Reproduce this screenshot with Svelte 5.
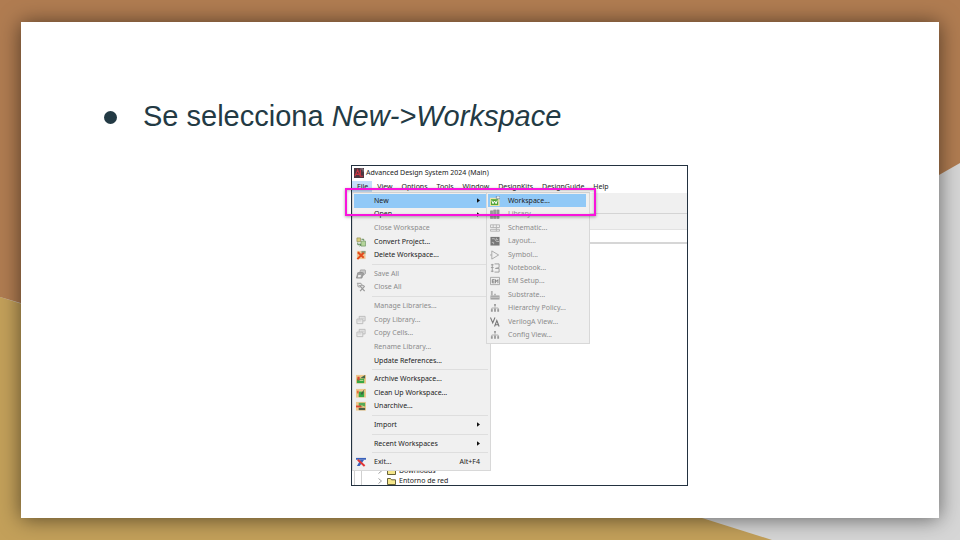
<script>
  const bar = ['File', 'View', 'Options', 'Tools', 'Window', 'DesignKits', 'DesignGuide', 'Help'];

  const fileMenu = [
    { label: 'New', arrow: true, active: true },
    { label: 'Open', arrow: true },
    { label: 'Close Workspace', off: true },
    { label: 'Convert Project...', icon: 'convert' },
    { label: 'Delete Workspace...', icon: 'delete' },
    null,
    { label: 'Save All', icon: 'save', off: true },
    { label: 'Close All', icon: 'closeall', off: true },
    null,
    { label: 'Manage Libraries...', off: true },
    { label: 'Copy Library...', icon: 'copy', off: true },
    { label: 'Copy Cells...', icon: 'copy', off: true },
    { label: 'Rename Library...', off: true },
    { label: 'Update References...' },
    null,
    { label: 'Archive Workspace...', icon: 'archive' },
    { label: 'Clean Up Workspace...', icon: 'clean' },
    { label: 'Unarchive...', icon: 'unarchive' },
    null,
    { label: 'Import', arrow: true },
    null,
    { label: 'Recent Workspaces', arrow: true },
    null,
    { label: 'Exit...', icon: 'exit', key: 'Alt+F4' }
  ];

  const newMenu = [
    { label: 'Workspace...', icon: 'workspace', active: true },
    { label: 'Library...', icon: 'library', off: true },
    { label: 'Schematic...', icon: 'schematic', off: true },
    { label: 'Layout...', icon: 'layout', off: true },
    { label: 'Symbol...', icon: 'symbol', off: true },
    { label: 'Notebook...', icon: 'notebook', off: true },
    { label: 'EM Setup...', icon: 'em', off: true },
    { label: 'Substrate...', icon: 'substrate', off: true },
    { label: 'Hierarchy Policy...', icon: 'tree', off: true },
    { label: 'VerilogA View...', icon: 'verilog', off: true },
    { label: 'Config View...', icon: 'tree', off: true }
  ];
</script>

{#snippet glyph(name)}
  <svg class="icon" viewBox="0 0 11 11" aria-hidden="true">
    {#if name === 'convert'}
      <path d="M1 1h4v4H1z" fill="#d8cf7c" stroke="#8b8a50" stroke-width=".7" />
      <path d="M5.500 4.500h5v5.500h-5z" fill="#b5d59b" stroke="#6b9060" stroke-width=".7" />
      <path d="M2 6v2.500h3M4 7l1.500 1.500L4 10M6 2.500h2.500V4" fill="none" stroke="#4c7d42" />
    {:else if name === 'delete'}
      <path d="M1 1h9.500v9H1z" fill="#f0c796" />
      <path d="M6 1h4.500v3H6z" fill="#8b9a7a" />
      <path d="M2 2.500l6.500 6M8.500 3L1.500 10" stroke="#e34b1c" stroke-width="2.200" />
    {:else if name === 'save'}
      <path d="M5 1h5l.5 1v3L8 7V4H4z" fill="#c8c8c8" stroke="#999" stroke-width=".8" />
      <path d="M2 4h5l1 1-1.500 5H.5z" fill="#a5a5a5" stroke="#858585" stroke-width=".8" />
      <path d="M2.500 6.500h3L5 9H2z" fill="#eee" />
    {:else if name === 'closeall'}
      <path d="M1 1.500h4l2 2M3 4h6M2 1.500v3l2 1.500" fill="none" stroke="#aaa" stroke-width="1.200" />
      <path d="M4.500 4.500l5 5.500M9.500 4.500l-5 5.500" stroke="#999" stroke-width="1.400" />
    {:else if name === 'copy'}
      <path d="M3.500 1.500h6.500v5H3.500z" fill="#e8e8e8" stroke="#b9b9b9" />
      <path d="M1 4.500h6.500v5H1z" fill="#ececec" stroke="#b9b9b9" />
      <path d="M2 6.500h4M5 3.500h4" stroke="#c9c9c9" />
    {:else if name === 'archive' || name === 'clean' || name === 'unarchive'}
      <path d="M0 1h11v9.500H0z" fill="#efc88c" />
      {#if name === 'archive'}
        <path d="M1 5h8v5H1z" fill="#38a845" /><path d="M1.500 3h2.500v4H1.500z" fill="#d94a34" />
        <path d="M5 4l5-3v4z" fill="#47664a" /><path d="M4 7h4" stroke="#d8e5a0" />
      {:else if name === 'clean'}
        <path d="M3 4h6v6H3z" fill="#38a845" /><path d="M1 3h2v3H1z" fill="#e46d3d" />
        <path d="M9.500 1L5 6.500l2 1z" fill="#47573e" />
      {:else}
        <path d="M3 2h7v4H3z" fill="#54aa58" /><path d="M0 5h6v2H0z" fill="#d94a34" />
        <path d="M3 7.500h7V10H3z" fill="#4d5d44" /><path d="M6 5l3 1.500" stroke="#eed07a" />
      {/if}
    {:else if name === 'exit'}
      <path d="M0 1h11v2H0z" fill="#3a61ba" />
      <path d="M5 3h4L4 10H1z" fill="#3a61ba" />
      <path d="M2 3l7.500 7" stroke="#e23535" stroke-width="2.200" />
    {:else if name === 'workspace'}
      <path d="M0 2h10.500v9H0z" fill="#f1e7a9" />
      <path d="M1 3.500h8V10H1z" fill="#52a637" />
      <path d="M2 5l1.300 3.500L5 5.500l1.700 3L8 5" fill="none" stroke="#fff" stroke-width="1.100" />
      <path d="M7 0h4v3H7z" fill="#e9edf3" stroke="#60788f" stroke-width=".7" />
    {:else if name === 'library'}
      <path d="M.5 2H3v8.500H.5zM4 1h2.500v9.500H4zM7.500 1H10v9.500H7.500z" fill="#9b9b9b" stroke="#858585" stroke-width=".6" />
    {:else if name === 'schematic'}
      <path d="M.5 2h10v3H.5zM.5 7h10v2H.5zM3.500 2v3M7 2v7" fill="none" stroke="#b3b3b3" />
    {:else if name === 'layout'}
      <path d="M.5 1h10v9.500H.5z" fill="#777" />
      <path d="M2 3h3l2 3h3M2 7h2v2M7 2v2h2" fill="none" stroke="#c0c0c0" />
    {:else if name === 'symbol'}
      <path d="M2 1v9l7.500-4.500zM0 5.500h2" fill="none" stroke="#a5a5a5" />
    {:else if name === 'notebook'}
      <path d="M2.500 1v9M1 2h3M1 5h3M1 9h3M5 1h5v4L6 6h4v4H5" fill="none" stroke="#999" />
    {:else if name === 'em'}
      <path d="M.5 1.500h10v8H.5z" fill="#eee" stroke="#a5a5a5" />
      <path d="M5 4H2.500v3.500H5M2.500 5.700H5M6 8V4l1.300 2L8.700 4v4" fill="none" stroke="#777" stroke-width=".9" />
    {:else if name === 'substrate'}
      <path d="M.5 6h10v4.500H.5z" fill="#a2a2a2" />
      <path d="M1 1h2v5H1zM4.500 4h2v2h-2z" fill="#b3b3b3" /><path d="M1 8h9" stroke="#ccc" />
    {:else if name === 'tree'}
      <path d="M5.500 2v3M2 8V5.500h7V8" fill="none" stroke="#aaa" />
      <path d="M4.500 1h2v2h-2zM1 7h2v2.500H1zM4.500 6h2v3.500h-2zM8 7h2v2.500H8z" fill="#999" />
    {:else if name === 'verilog'}
      <path d="M.5 .5L3 6.500 5.500 .5M5 10.500L7.500 4l2.500 6.500M6 8.500h3" fill="none" stroke="#777" stroke-width="1.200" />
    {/if}
  </svg>
{/snippet}

{#snippet entry(item)}
  {#if item}
    <button class="item" class:active={item.active} disabled={item.off} role="menuitem">
      <span class="slot">{#if item.icon}{@render glyph(item.icon)}{/if}</span>
      <span class="label">{item.label}</span>
      {#if item.key}<span>{item.key}</span>{/if}
      {#if item.arrow}<svg class="arrow" viewBox="0 0 4 6" aria-hidden="true"><path d="M0 0l4 3-4 3z" fill="#111" /></svg>{/if}
    </button>
  {:else}
    <div class="sep" role="separator"></div>
  {/if}
{/snippet}

<main class="slide">
  <svg class="backdrop" viewBox="0 0 960 540" preserveAspectRatio="none" aria-hidden="true">
    <path d="M0 0h960v540H0z" fill="#d6d6d6" />
    <path d="M0 297L772 540H0z" fill="#c3a05a" />
    <path d="M0 0h960v163L480 437 0 297z" fill="#b07c51" />
  </svg>

  <section class="sheet">
    <ul class="points">
      <li>Se selecciona <em>New-&gt;Workspace</em></li>
    </ul>

    <div class="window">
      <header class="title">
        <svg class="logo" viewBox="0 0 11 11" aria-hidden="true">
          <path d="M0 0h11v11H0z" fill="#4b3841" />
          <path d="M1 9l3-7 3 7M2 7h4M7 2v7h3" fill="none" stroke="#c93543" stroke-width="1.200" />
          <path d="M7 1h3v3" fill="none" stroke="#9b8c95" />
        </svg>
        <span>Advanced Design System 2024 (Main)</span>
      </header>

      <nav class="bar">
        {#each bar as name, i}
          <button class:open={i === 0}>{name}</button>
        {/each}
      </nav>

      <div class="tools"></div>
      <div class="tools second"></div>
      <div class="strip"></div>

      <div class="files">
        {#each ['Downloads', 'Entorno de red'] as name}
          <div class="node">
            <svg class="chevron" viewBox="0 0 4 6" aria-hidden="true"><path d="M.5.5L3.500 3 .5 5.500" fill="none" stroke="#888" stroke-width=".8" /></svg>
            <svg class="folder" viewBox="0 0 9 7" aria-hidden="true"><path d="M.5 6.500v-6h3l1 1.300h4v4.700z" fill="#f5e68a" stroke="#55502a" stroke-width=".9" /></svg>
            <span>{name}</span>
          </div>
        {/each}
      </div>

      <div class="menu main" role="menu" aria-label="File">
        {#each fileMenu as item}{@render entry(item)}{/each}
      </div>
      <div class="menu sub" role="menu" aria-label="New">
        {#each newMenu as item}{@render entry(item)}{/each}
      </div>
      <div class="highlight"></div>
    </div>
  </section>
</main>

<style>
  .slide {
    position: relative;
    box-sizing: border-box;
    min-height: 100vh;
    padding: 22px 21px;
    display: flex;
    overflow: hidden;
    font-family: "Liberation Sans", Arial, sans-serif;
  }
  .backdrop {
    position: absolute;
    inset: 0;
    width: 100%;
    height: 100%;
  }
  .sheet {
    position: relative;
    flex: 1;
    box-sizing: border-box;
    padding: 76px 80px 32px;
    background: #fff;
    box-shadow: 0 1px 20px rgba(0, 0, 0, 0.55);
  }
  .points {
    margin: 0 0 31px;
    padding: 0;
    list-style: none;
    color: #233a44;
    font-size: 29px;
    line-height: 36px;
  }
  .points li {
    display: flex;
    align-items: center;
    white-space: pre;
  }
  .points li::before {
    content: "";
    width: 13px;
    height: 13px;
    margin: 3px 26px 0 3px;
    border-radius: 50%;
    background: #233a44;
  }
  .window {
    position: relative;
    display: flex;
    flex-direction: column;
    box-sizing: border-box;
    width: 337px;
    min-height: 321px;
    margin-left: 250px;
    border: 1px solid #233240;
    background: #fff;
    color: #222;
    font-family: "Noto Sans", "Open Sans", sans-serif;
    font-size: 7px;
    line-height: 12px;
  }
  .title {
    display: flex;
    align-items: center;
    gap: 2px;
    height: 14px;
    padding: 0 0 1px 2px;
  }
  .logo {
    width: 10px;
    height: 10px;
  }
  button {
    margin: 0;
    padding: 0;
    border: 0;
    background: none;
    color: inherit;
    font: inherit;
    text-align: left;
    white-space: nowrap;
  }
  .bar {
    display: flex;
    height: 12px;
  }
  .bar button {
    padding: 0 4px 0 5px;
  }
  .bar .open {
    background: #c5dffa;
  }
  .tools {
    height: 20px;
    background: #f0f0f0;
    border-bottom: 1px solid #d4d4d4;
  }
  .second {
    height: 15px;
    border-bottom-color: #e2e2e2;
  }
  .strip {
    height: 12px;
    border-bottom: 2px solid #d6d6d6;
  }
  .files {
    display: flex;
    flex-direction: column;
    justify-content: flex-end;
    flex: 1;
    margin-left: 2px;
    padding-left: 17px;
    border-left: 1px solid #d0d0d0;
    background: linear-gradient(#d0d0d0, #d0d0d0) 6px 0 / 1px 100% no-repeat;
  }
  .node {
    display: flex;
    align-items: center;
    height: 12px;
  }
  .node:last-child {
    height: 8px;
  }
  .chevron {
    width: 4px;
    height: 6px;
    margin: 0 5px 0 6px;
  }
  .folder {
    width: 9px;
    height: 7px;
    margin-right: 3px;
  }
  .menu {
    position: absolute;
    display: flex;
    flex-direction: column;
    box-sizing: border-box;
    padding: 1px;
    border: 1px solid #d8d8d8;
    background: #f0f0f0;
  }
  .main {
    top: 26px;
    left: 0;
    width: 139px;
    height: 279px;
  }
  .sub {
    top: 26px;
    left: 134px;
    width: 104px;
    height: 152px;
  }
  .item {
    display: flex;
    flex: 1;
    align-items: center;
    padding-right: 9px;
  }
  .item:disabled {
    color: #8b8b8b;
  }
  .active {
    background: #91c9f7;
  }
  .main .active,
  .sub .active {
    margin-right: 2px;
    padding-right: 7px;
  }
  .slot {
    display: flex;
    width: 18px;
    padding-left: 2px;
  }
  .icon {
    width: 10px;
    height: 10px;
  }
  .label {
    flex: 1;
  }
  .arrow {
    width: 3px;
    height: 5px;
  }
  .sep {
    height: 1px;
    margin: 2px 1px 2px 18px;
    background: #dedede;
  }
  .highlight {
    position: absolute;
    top: 22px;
    left: -7px;
    box-sizing: border-box;
    width: 251px;
    height: 28px;
    border: 2px solid #f914dc;
    box-shadow: 0 1px 3px rgba(0, 0, 0, 0.35), inset 0 1px 3px rgba(0, 0, 0, 0.25);
    pointer-events: none;
  }
</style>
